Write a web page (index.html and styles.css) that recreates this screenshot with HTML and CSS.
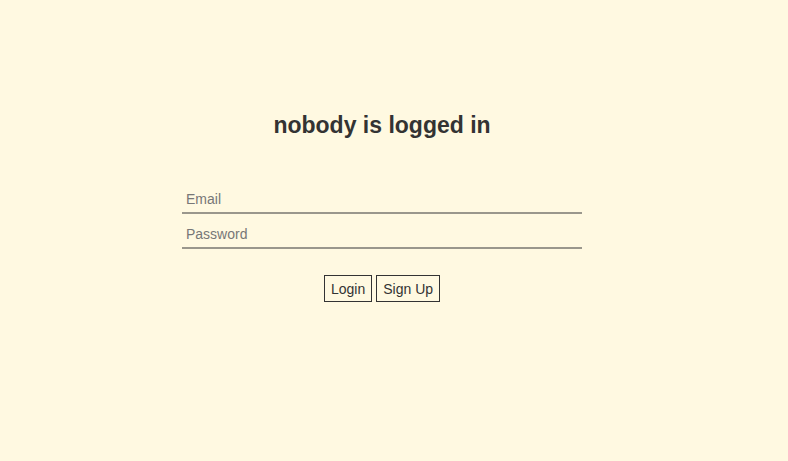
FILE: index.html
```html
<!DOCTYPE html>
<html>
<head>
<meta charset="utf-8">
<link rel="stylesheet" href="styles.css">
</head>
<body>
<div class="page">
  <h1 class="title">nobody is logged in</h1>
  <form class="form">
    <input class="field" type="text" placeholder="Email">
    <input class="field" type="password" placeholder="Password">
    <div class="actions">
      <button class="btn" type="button">Login</button>
      <button class="btn" type="button">Sign Up</button>
    </div>
  </form>
</div>
</body>
</html>
```
FILE: styles.css
```css
html, body {
  margin: 0;
  padding: 0;
  background: #fff9e1;
}
body {
  font-family: "Liberation Sans", Arial, sans-serif;
  color: #333;
  height: 461px;
}
.page {
  width: 764px;
  padding-top: 110px;
  display: flex;
  flex-direction: column;
  align-items: center;
}
.title {
  margin: 0;
  font-size: 23px;
  font-weight: bold;
  line-height: 30px;
  color: #333;
}
.form {
  margin-top: 41px;
  width: 400px;
  display: flex;
  flex-direction: column;
}
.field {
  display: block;
  width: 400px;
  box-sizing: border-box;
  height: 33px;
  margin: 0 0 2px 0;
  padding: 8px 4px 4px 4px;
  border: none;
  border-bottom: 2px solid #9a978c;
  background: transparent;
  font-family: "Liberation Sans", Arial, sans-serif;
  font-size: 14px;
  color: #333;
  outline: none;
}
.field::placeholder {
  color: #777;
}
.actions {
  margin-top: 24px;
  display: flex;
  justify-content: center;
  gap: 4px;
}
.btn {
  height: 27px;
  padding: 0 6px;
  border: 1px solid #333;
  background: transparent;
  font-family: "Liberation Sans", Arial, sans-serif;
  font-size: 14px;
  color: #333;
  cursor: pointer;
}
```
